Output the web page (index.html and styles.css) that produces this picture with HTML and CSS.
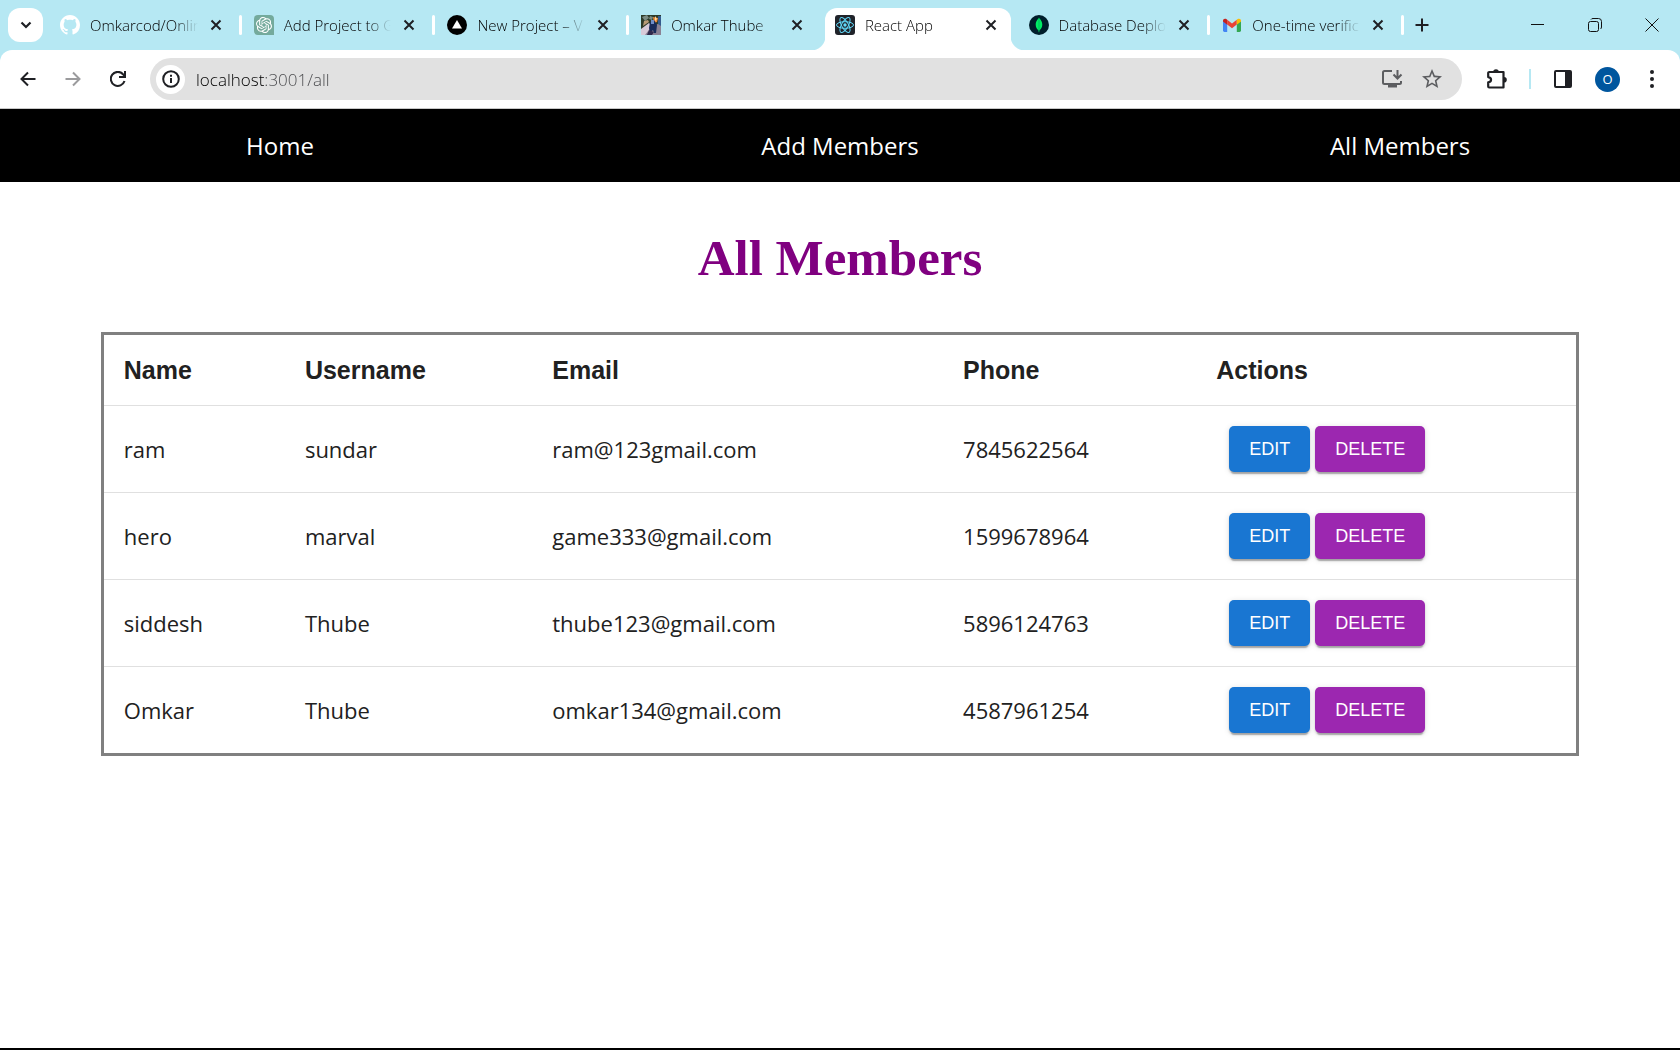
FILE: index.html
```html
<!DOCTYPE html>
<html lang="en">
<head>
<meta charset="utf-8">
<title>React App</title>
<meta name="viewport" content="width=device-width, initial-scale=1">
<link rel="stylesheet" href="styles.css">
</head>
<body>
<svg class="sprite" aria-hidden="true">
  <symbol id="x" viewBox="0 0 12 12"><path d="M1.5 1.5l9 9M10.500 1.500l-9 9" fill="none" stroke="#1f2024" stroke-width="2"/></symbol>
</svg>
<header class="browser">
  <div class="tabstrip">
    <button class="tab-search" aria-label="Search tabs"><svg width="12" height="8" viewBox="0 0 12 8"><path d="M1.500 1.500L6 6l4.500-4.500" fill="none" stroke="#1f2024" stroke-width="2.200"/></svg></button>
    <div class="tabs">
      <div class="tab divided">
        <svg class="favicon" viewBox="0 0 16 16"><path fill="#fff" d="M8 0C3.580 0 0 3.580 0 8c0 3.540 2.290 6.530 5.470 7.590.4.070.55-.17.55-.38 0-.19-.01-.82-.01-1.490-2.010.37-2.530-.49-2.690-.94-.09-.23-.48-.94-.82-1.130-.28-.15-.68-.52-.01-.53.63-.01 1.080.58 1.230.82.72 1.210 1.870.87 2.330.66.070-.52.28-.87.51-1.070-1.780-.2-3.640-.89-3.640-3.950 0-.87.31-1.590.82-2.150-.08-.2-.36-1.020.08-2.120 0 0 .67-.21 2.200.82.64-.18 1.320-.27 2-.27s1.360.09 2 .27c1.530-1.040 2.200-.82 2.200-.82.44 1.100.16 1.920.08 2.120.51.56.82 1.270.82 2.150 0 3.070-1.870 3.750-3.650 3.950.29.25.54.73.54 1.480 0 1.070-.01 1.930-.01 2.200 0 .21.15.46.55.38A8.010 8.010 0 0 0 16 8c0-4.420-3.580-8-8-8z"/></svg>
        <a class="tab-title" href="#github">Omkarcod/Online</a>
        <button class="tab-close" aria-label="Close tab"><svg width="12" height="12"><use href="#x"/></svg></button>
      </div>
      <div class="tab divided">
        <svg class="favicon" viewBox="0 0 20 20"><path d="M4 0h12a4 4 0 0 1 4 4v16H4a4 4 0 0 1-4-4V4a4 4 0 0 1 4-4z" fill="#74aa9c"/><g transform="translate(2 2) scale(.667)"><path fill="#fff" d="M22.282 9.821a5.985 5.985 0 0 0-.516-4.910 6.046 6.046 0 0 0-6.510-2.900A6.065 6.065 0 0 0 4.981 4.182a5.985 5.985 0 0 0-3.998 2.900 6.046 6.046 0 0 0 .743 7.097 5.980 5.980 0 0 0 .511 4.911 6.051 6.051 0 0 0 6.515 2.900A5.985 5.985 0 0 0 13.260 24a6.056 6.056 0 0 0 5.772-4.206 5.990 5.990 0 0 0 3.998-2.900 6.056 6.056 0 0 0-.748-7.073zM13.260 22.430a4.476 4.476 0 0 1-2.876-1.041l.142-.080 4.778-2.758a.795.795 0 0 0 .393-.681v-6.737l2.020 1.169a.071.071 0 0 1 .038.052v5.583a4.504 4.504 0 0 1-4.495 4.493zM3.600 18.304a4.471 4.471 0 0 1-.535-3.014l.142.085 4.783 2.759a.771.771 0 0 0 .781 0l5.843-3.369v2.332a.080.080 0 0 1-.033.062L9.740 19.950a4.499 4.499 0 0 1-6.140-1.646zM2.341 7.896a4.485 4.485 0 0 1 2.366-1.973V11.600a.766.766 0 0 0 .388.677l5.815 3.354-2.020 1.169a.076.076 0 0 1-.071 0l-4.830-2.787A4.504 4.504 0 0 1 2.341 7.872zm16.597 3.855l-5.833-3.387L15.119 7.200a.076.076 0 0 1 .071 0l4.830 2.791a4.494 4.494 0 0 1-.676 8.105v-5.678a.790.790 0 0 0-.406-.667zm2.010-3.023l-.142-.085-4.774-2.782a.776.776 0 0 0-.785 0L9.409 9.230V6.897a.066.066 0 0 1 .028-.061l4.830-2.787a4.499 4.499 0 0 1 6.680 4.660zM8.307 12.863l-2.020-1.164a.080.080 0 0 1-.038-.057V6.075a4.499 4.499 0 0 1 7.375-3.453l-.142.080L8.704 5.460a.795.795 0 0 0-.393.681zm1.097-2.366l2.602-1.500 2.607 1.500v2.999l-2.597 1.500-2.607-1.500z"/></g></svg>
        <a class="tab-title" href="#chat">Add Project to G</a>
        <button class="tab-close" aria-label="Close tab"><svg width="12" height="12"><use href="#x"/></svg></button>
      </div>
      <div class="tab divided">
        <svg class="favicon" viewBox="0 0 20 20"><circle cx="10" cy="10" r="10"/><path d="M10 5l5 8.500H5z" fill="#fff"/></svg>
        <a class="tab-title" href="#vercel">New Project – V</a>
        <button class="tab-close" aria-label="Close tab"><svg width="12" height="12"><use href="#x"/></svg></button>
      </div>
      <div class="tab">
        <svg class="favicon" viewBox="0 0 20 20"><path d="M0 0h20v20H0z" fill="#8a8294"/><path d="M0 0h20v7l-5 3-4-2-5 4-6 3z" fill="#2d3b29"/><path d="M1 2l5-2 2 3-4 3zM9 1l3 1-1 3-3-1z" fill="#7b8b83"/><path d="M12 2l5 1-1 4-3 1z" fill="#f08a38"/><path d="M14 1l2 3-2 2z" fill="#ffd9a0"/><path d="M17 1h3v10l-3-2z" fill="#355b8d"/><path d="M0 14l8-6 3 3-7 9H0z" fill="#d8cbd9"/><path d="M3 6l4-1 1 2-6 4z" fill="#b89b76"/><path d="M9 7l4-2 3 5-1 8h-2l-1-3-3 3-1-5z" fill="#182c5b"/><path d="M10 5h3v4h-3z" fill="#6e8ec8"/><path d="M8 15l5 2-2 3H6z" fill="#312a4d"/></svg>
        <a class="tab-title" href="#portfolio">Omkar Thube</a>
        <button class="tab-close" aria-label="Close tab"><svg width="12" height="12"><use href="#x"/></svg></button>
      </div>
      <div class="tab active">
        <svg class="favicon" viewBox="0 0 20 20"><rect width="20" height="20" rx="3" fill="#20232a"/><g fill="none" stroke="#61dafb"><ellipse cx="10" cy="10" rx="8.500" ry="3.300"/><ellipse cx="10" cy="10" rx="8.500" ry="3.300" transform="rotate(60 10 10)"/><ellipse cx="10" cy="10" rx="8.500" ry="3.300" transform="rotate(120 10 10)"/></g><circle cx="10" cy="10" r="1.700" fill="#61dafb"/></svg>
        <a class="tab-title" href="#all" aria-current="page">React App</a>
        <button class="tab-close" aria-label="Close tab"><svg width="12" height="12"><use href="#x"/></svg></button>
      </div>
      <div class="tab divided">
        <svg class="favicon" viewBox="0 0 20 20"><circle cx="10" cy="10" r="10" fill="#001e2b"/><path d="M10 2.500c.4 1.500 3.300 3 3.300 7.300 0 3-1.700 4.700-2.900 5.500l-.2 2h-.5l-.2-2C8.300 14.500 6.700 12.800 6.700 9.800c0-4.300 2.900-5.800 3.300-7.300z" fill="#00ed64"/><path d="M10 4v12" stroke="#00a35c" stroke-width=".6"/></svg>
        <a class="tab-title" href="#database">Database Deplo</a>
        <button class="tab-close" aria-label="Close tab"><svg width="12" height="12"><use href="#x"/></svg></button>
      </div>
      <div class="tab divided">
        <svg class="favicon" viewBox="0 0 20 20"><path d="M1 5.500l4.200 3.200V17H2.400A1.400 1.400 0 0 1 1 15.600z" fill="#4285f4"/><path d="M19 5.500l-4.200 3.200V17h2.800a1.400 1.400 0 0 0 1.400-1.400z" fill="#34a853"/><path d="M5.200 4.800L10 8.400l4.800-3.600v4.800L10 13.200 5.200 9.600z" fill="#ea4335"/><path d="M14.800 4.800l.9-.7C17.200 3 19 4 19 5.500v1l-4.200 3.200z" fill="#fbbc04"/><path d="M1 6.500v-1C1 4 2.800 3 4.300 4.100l.9.700v4.900z" fill="#c5221f"/></svg>
        <a class="tab-title" href="#mail">One-time verific</a>
        <button class="tab-close" aria-label="Close tab"><svg width="12" height="12"><use href="#x"/></svg></button>
      </div>
    </div>
    <button class="icon-button" aria-label="New tab"><svg width="14" height="14"><path d="M7 .5v13M.5 7h13" stroke="#1f2024" stroke-width="2"/></svg></button>
    <div class="window-controls">
      <button class="window-button" aria-label="Minimize"><svg width="14" height="14"><path d="M0 6.500h13" stroke="#111"/></svg></button>
      <button class="window-button" aria-label="Restore"><svg width="14" height="14"><g fill="none" stroke="#111"><rect x=".5" y="3.500" width="10" height="10" rx="2"/><path d="M3 1.500C3.400.8 4 .5 5 .5h5.500a3 3 0 0 1 3 3V9c0 1-.4 1.500-1 2"/></g></svg></button>
      <button class="window-button" aria-label="Close"><svg width="14" height="14"><path d="M.5.5l13 13M13.500.5l-13 13" stroke="#111"/></svg></button>
    </div>
  </div>
  <div class="toolbar-wrap">
  <div class="toolbar">
    <div class="history">
      <button class="icon-button" aria-label="Back"><svg width="16" height="16"><path d="M15.500 8H2M8 1.500L1.500 8 8 14.500" fill="none" stroke="#1f2024" stroke-width="2"/></svg></button>
      <button class="icon-button" aria-label="Forward" disabled><svg width="16" height="16"><path d="M.5 8H14M8 1.500L14.500 8 8 14.500" fill="none" stroke="#9b9b9d" stroke-width="2"/></svg></button>
      <button class="icon-button" aria-label="Reload"><svg width="16" height="16"><path d="M14.500 10A7 7 0 1 1 13 3.200L14.800 5" fill="none" stroke="#1f2024" stroke-width="2.100"/><path d="M16 0v7H9V5h5V0z" fill="#1f2024"/></svg></button>
    </div>
    <div class="address">
      <button class="site-info" aria-label="Site information"><svg width="18" height="18"><circle cx="9" cy="9" r="7.800" fill="none" stroke="#1f2024" stroke-width="2"/><path d="M9 8v5M9 4.800v2" stroke="#1f2024" stroke-width="2"/></svg></button>
      <input class="url" type="text" aria-label="Address" value="localhost:3001/all">
      <button class="icon-button" aria-label="Install app"><svg width="22" height="20"><g fill="none" stroke="#5c5d60" stroke-width="2"><path d="M11 2H3.500A1.500 1.500 0 0 0 2 3.500v10A1.500 1.500 0 0 0 3.500 15h15a1.500 1.500 0 0 0 1.500-1.500V12"/><path d="M16.500 1v8M12.500 5.500l4 4 4-4"/></g><path d="M7 15h9v3.500H7z" fill="#5c5d60"/></svg></button>
      <button class="icon-button" aria-label="Bookmark"><svg width="20" height="20" viewBox="2 2 20 20"><path fill="#5c5d60" d="M22 9.240l-7.190-.62L12 2 9.190 8.630 2 9.240l5.460 4.730L5.820 21 12 17.270 18.180 21l-1.630-7.030L22 9.240zM12 15.400l-3.760 2.270 1-4.280-3.320-2.880 4.380-.38L12 6.100l1.710 4.040 4.380.38-3.320 2.880 1 4.280L12 15.400z"/></svg></button>
    </div>
    <div class="tools">
      <button class="icon-button" aria-label="Extensions"><svg width="22" height="22"><path d="M3.200 4h14.300v15.500H3.200a1 1 0 0 1-1-1v-4.200c3.800-.6 3.800-4.600 0-5.200V5a1 1 0 0 1 1-1z" fill="none" stroke="#1f2024" stroke-width="2.200" stroke-linejoin="round"/><path d="M7.200 4a2.800 2.800 0 0 1 5.600 0zM18 9a2.800 2.800 0 0 1 0 5.600z" fill="#1f2024"/></svg></button>
      <span class="tool-divider"></span>
      <button class="icon-button" aria-label="Side panel"><svg width="18" height="18"><rect x="1" y="1" width="16" height="16" rx="1" fill="none" stroke="#1f2024" stroke-width="2"/><path d="M11 1h6v16h-6z" fill="#1f2024"/></svg></button>
      <button class="avatar" aria-label="Profile">O</button>
      <button class="icon-button" aria-label="Menu"><svg width="4" height="18"><g fill="#1f2024"><circle cx="2" cy="2" r="2"/><circle cx="2" cy="9" r="2"/><circle cx="2" cy="16" r="2"/></g></svg></button>
    </div>
  </div>
  </div>
</header>
<nav class="site-nav">
  <a href="#home">Home</a>
  <a href="#add">Add Members</a>
  <a href="#all">All Members</a>
</nav>
<main>
  <h1>All Members</h1>
  <table class="members">
    <colgroup><col class="col-name"><col class="col-user"><col class="col-email"><col class="col-phone"><col></colgroup>
    <thead><tr><th scope="col">Name</th><th scope="col">Username</th><th scope="col">Email</th><th scope="col">Phone</th><th scope="col">Actions</th></tr></thead>
    <tbody>
      <tr><td>ram</td><td>sundar</td><td>ram@123gmail.com</td><td>7845622564</td><td><div class="actions"><button class="action edit">EDIT</button><button class="action delete">DELETE</button></div></td></tr>
      <tr><td>hero</td><td>marval</td><td>game333@gmail.com</td><td>1599678964</td><td><div class="actions"><button class="action edit">EDIT</button><button class="action delete">DELETE</button></div></td></tr>
      <tr><td>siddesh</td><td>Thube</td><td>thube123@gmail.com</td><td>5896124763</td><td><div class="actions"><button class="action edit">EDIT</button><button class="action delete">DELETE</button></div></td></tr>
      <tr><td>Omkar</td><td>Thube</td><td>omkar134@gmail.com</td><td>4587961254</td><td><div class="actions"><button class="action edit">EDIT</button><button class="action delete">DELETE</button></div></td></tr>
    </tbody>
  </table>
</main>
</body>
</html>
```
FILE: styles.css
```css
* { box-sizing: border-box; }

body {
  margin: 0;
  min-height: 100vh;
  border-bottom: 2px solid #000;
  background: #fff;
  color: #212121;
  font-family: "Open Sans", "Noto Sans", sans-serif;
}

button { border: 0; padding: 0; background: none; font: inherit; cursor: pointer; }
svg { display: block; flex: none; }
.sprite { position: absolute; width: 0; height: 0; }

/* Browser frame */
.browser { background: #b6e8f3; border-bottom: 1px solid #c8c8c8; }

.tabstrip { display: flex; align-items: center; height: 50px; padding-left: 8px; }

.tab-search {
  display: grid;
  place-items: center;
  flex: none;
  width: 35px;
  height: 34px;
  border-radius: 12px;
  background: #fff;
}

.tabs { display: flex; flex: 0 1 1356px; min-width: 0; height: 50px; margin-left: 5px; }

.tab {
  position: relative;
  display: flex;
  flex: 1 1 0;
  align-items: center;
  min-width: 0;
  padding: 0 20px 0 12px;
}

.tab.divided::after {
  content: "";
  position: absolute;
  right: 0;
  top: 15px;
  width: 3px;
  height: 20px;
  border-radius: 2px;
  background: #fff;
}

.tab.active { z-index: 0; }

.tab.active::before {
  content: "";
  position: absolute;
  z-index: -1;
  inset: 8px -8px 0 -12px;
  background:
    radial-gradient(circle at 0 0, transparent 14px, #fff 15px) 0 100% / 14px 14px no-repeat,
    radial-gradient(circle at 100% 0, transparent 14px, #fff 15px) 100% 100% / 14px 14px no-repeat;
}

.tab.active::after {
  content: "";
  position: absolute;
  z-index: -1;
  inset: 8px 6px 0 2px;
  border-radius: 12px 12px 0 0;
  background: #fff;
}

.favicon { width: 20px; height: 20px; }

.tab-title {
  flex: 1;
  min-width: 0;
  margin: 0 12px 0 10px;
  overflow: hidden;
  color: #000;
  font-size: 15px;
  font-weight: 300;
  line-height: 20px;
  text-decoration: none;
  white-space: nowrap;
  mask-image: linear-gradient(to right, #000 calc(100% - 24px), transparent);
}

.tab-close { display: grid; place-items: center; width: 12px; height: 20px; }
.icon-button { display: grid; place-items: center; flex: none; width: 36px; height: 36px; }
.window-controls { display: flex; margin-left: auto; }
.window-button { display: grid; place-items: center; width: 57px; height: 48px; }

.toolbar-wrap { background: #b6e8f3; }

.toolbar {
  display: flex;
  align-items: center;
  height: 58px;
  padding: 0 10px;
  border-radius: 12px 12px 0 0;
  background: #fff;
}

.history { display: flex; gap: 9px; }

.address {
  display: flex;
  flex: 1;
  align-items: center;
  gap: 4px;
  height: 42px;
  min-width: 0;
  margin-left: 14px;
  padding: 0 12px 0 6px;
  border-radius: 21px;
  background: #e1e1e1;
}

.site-info {
  display: grid;
  place-items: center;
  flex: none;
  width: 29px;
  height: 29px;
  border-radius: 50%;
  background: #fff;
}

.url {
  flex: 1;
  min-width: 0;
  height: 36px;
  padding: 0 0 0 7px;
  border: 0;
  background: linear-gradient(to right, #000 76px, #46474a 76px) text;
  color: transparent;
  font: 300 17px/24px "Open Sans", "Noto Sans", sans-serif;
}

.tools { display: flex; align-items: center; margin-left: 17px; }
.tool-divider { width: 2px; height: 20px; margin: 0 14px; background: #b6e8f3; }

.avatar {
  width: 25px;
  height: 25px;
  margin: 0 14px;
  border-radius: 50%;
  background: #00569e;
  color: #fff;
  font-size: 13px;
  line-height: 25px;
}

/* Site */
.site-nav {
  display: grid;
  grid-template-columns: repeat(3, 1fr);
  align-items: center;
  height: 73px;
  background: #000;
  text-align: center;
}

.site-nav a { color: #fff; font-size: 24px; line-height: 32px; text-decoration: none; }

main { padding: 46px 6% 0; }

h1 {
  margin: 0 0 44px;
  color: purple;
  font: bold 51px/60px "Liberation Serif", "Times New Roman", serif;
  text-align: center;
}

.members {
  width: 100%;
  border: 3px solid #808080;
  border-spacing: 0;
  table-layout: fixed;
}

.col-name { width: 12.3%; }
.col-user { width: 16.8%; }
.col-email { width: 27.9%; }
.col-phone { width: 17.2%; }

.members th,
.members td { padding: 0 20px; border-bottom: 1px solid #e0e0e0; text-align: left; }

.members th {
  height: 71px;
  font: bold 25px/32px "Liberation Sans", Arial, sans-serif;
}

.members td { height: 87px; font-size: 22px; font-weight: 500; line-height: 32px; }
.members tbody tr:last-child td { height: 86px; border-bottom: 0; }

.actions { display: flex; gap: 5px; margin-left: 13px; }

.action {
  height: 46px;
  padding: 0 20px;
  border-radius: 5px;
  color: #fff;
  font: 18px/24px "Liberation Sans", Arial, sans-serif;
  box-shadow: 0 4px 1px -2px rgba(0, 0, 0, .2), 0 2px 2px rgba(0, 0, 0, .14), 0 1px 6px rgba(0, 0, 0, .12);
}

.edit { background: #1976d2; }
.delete { background: #9c27b0; }
```
